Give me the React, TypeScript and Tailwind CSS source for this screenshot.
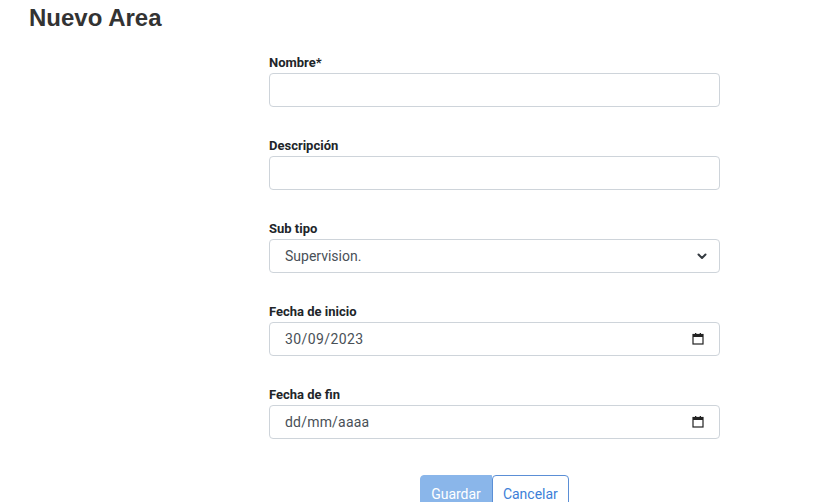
import React from "react";

const labelCls = "block text-[13px] leading-[16px] font-bold text-[#212529] mb-[2px]";
const boxCls =
  "h-[34px] w-full rounded-[4px] border border-[#ced4da] bg-white flex items-center pl-[15px] pr-[12px] text-[14px] text-[#495057]";

function CalendarIcon() {
  return (
    <svg width="12" height="12" viewBox="0 0 12 12" className="text-[#222]">
      <rect x="1" y="1.5" width="10" height="9.5" fill="none" stroke="currentColor" strokeWidth="1.2" />
      <rect x="1" y="1.5" width="10" height="2.5" fill="currentColor" />
      <rect x="3" y="0" width="1.3" height="2" fill="currentColor" />
      <rect x="7.7" y="0" width="1.3" height="2" fill="currentColor" />
    </svg>
  );
}

function Chevron() {
  return (
    <svg width="10" height="7" viewBox="0 0 10 7">
      <path d="M1.5 1.5 L5 5 L8.5 1.5" fill="none" stroke="#343a40" strokeWidth="2" strokeLinecap="round" strokeLinejoin="round" />
    </svg>
  );
}

export default function App() {
  return (
    <div className="w-[823px] h-[502px] overflow-hidden bg-white" style={{ fontFamily: "Roboto, 'Liberation Sans', sans-serif" }}>
      <h1
        className="pl-[29px] pt-[5px] text-[24px] leading-[26px] font-bold text-[#333333]"
        style={{ fontFamily: "'Liberation Sans', Arial, sans-serif" }}
      >
        Nuevo Area
      </h1>
      <div className="ml-[269px] w-[451px] mt-[24px] flex flex-col">
        <div className="mb-[31px]">
          <label className={labelCls}>Nombre*</label>
          <div className={boxCls}></div>
        </div>
        <div className="mb-[31px]">
          <label className={labelCls}>Descripción</label>
          <div className={boxCls}></div>
        </div>
        <div className="mb-[31px]">
          <label className={labelCls}>Sub tipo</label>
          <div className={boxCls + " justify-between pr-[5px]"}>
            <span>Supervision.</span>
            <Chevron />
          </div>
        </div>
        <div className="mb-[31px]">
          <label className={labelCls}>Fecha de inicio</label>
          <div className={boxCls + " justify-between pl-[12px] pr-[15px]"}>
            <span className="tracking-[0.4px]">30/09/2023</span>
            <CalendarIcon />
          </div>
        </div>
        <div className="mb-[36px]">
          <label className={labelCls}>Fecha de fin</label>
          <div className={boxCls + " justify-between pl-[12px] pr-[15px]"}>
            <span className="tracking-[0.2px]">dd/mm/aaaa</span>
            <CalendarIcon />
          </div>
        </div>
        <div className="flex justify-center">
          <button className="h-[38px] px-[10px] bg-[#8ab6ea] text-white text-[14px] rounded-l-[4px] border border-[#8ab6ea]">
            Guardar
          </button>
          <button className="h-[38px] px-[10px] bg-white text-[#3d7fd8] text-[14px] rounded-[4px] border border-[#5b8fd6]">
            Cancelar
          </button>
        </div>
      </div>
    </div>
  );
}
